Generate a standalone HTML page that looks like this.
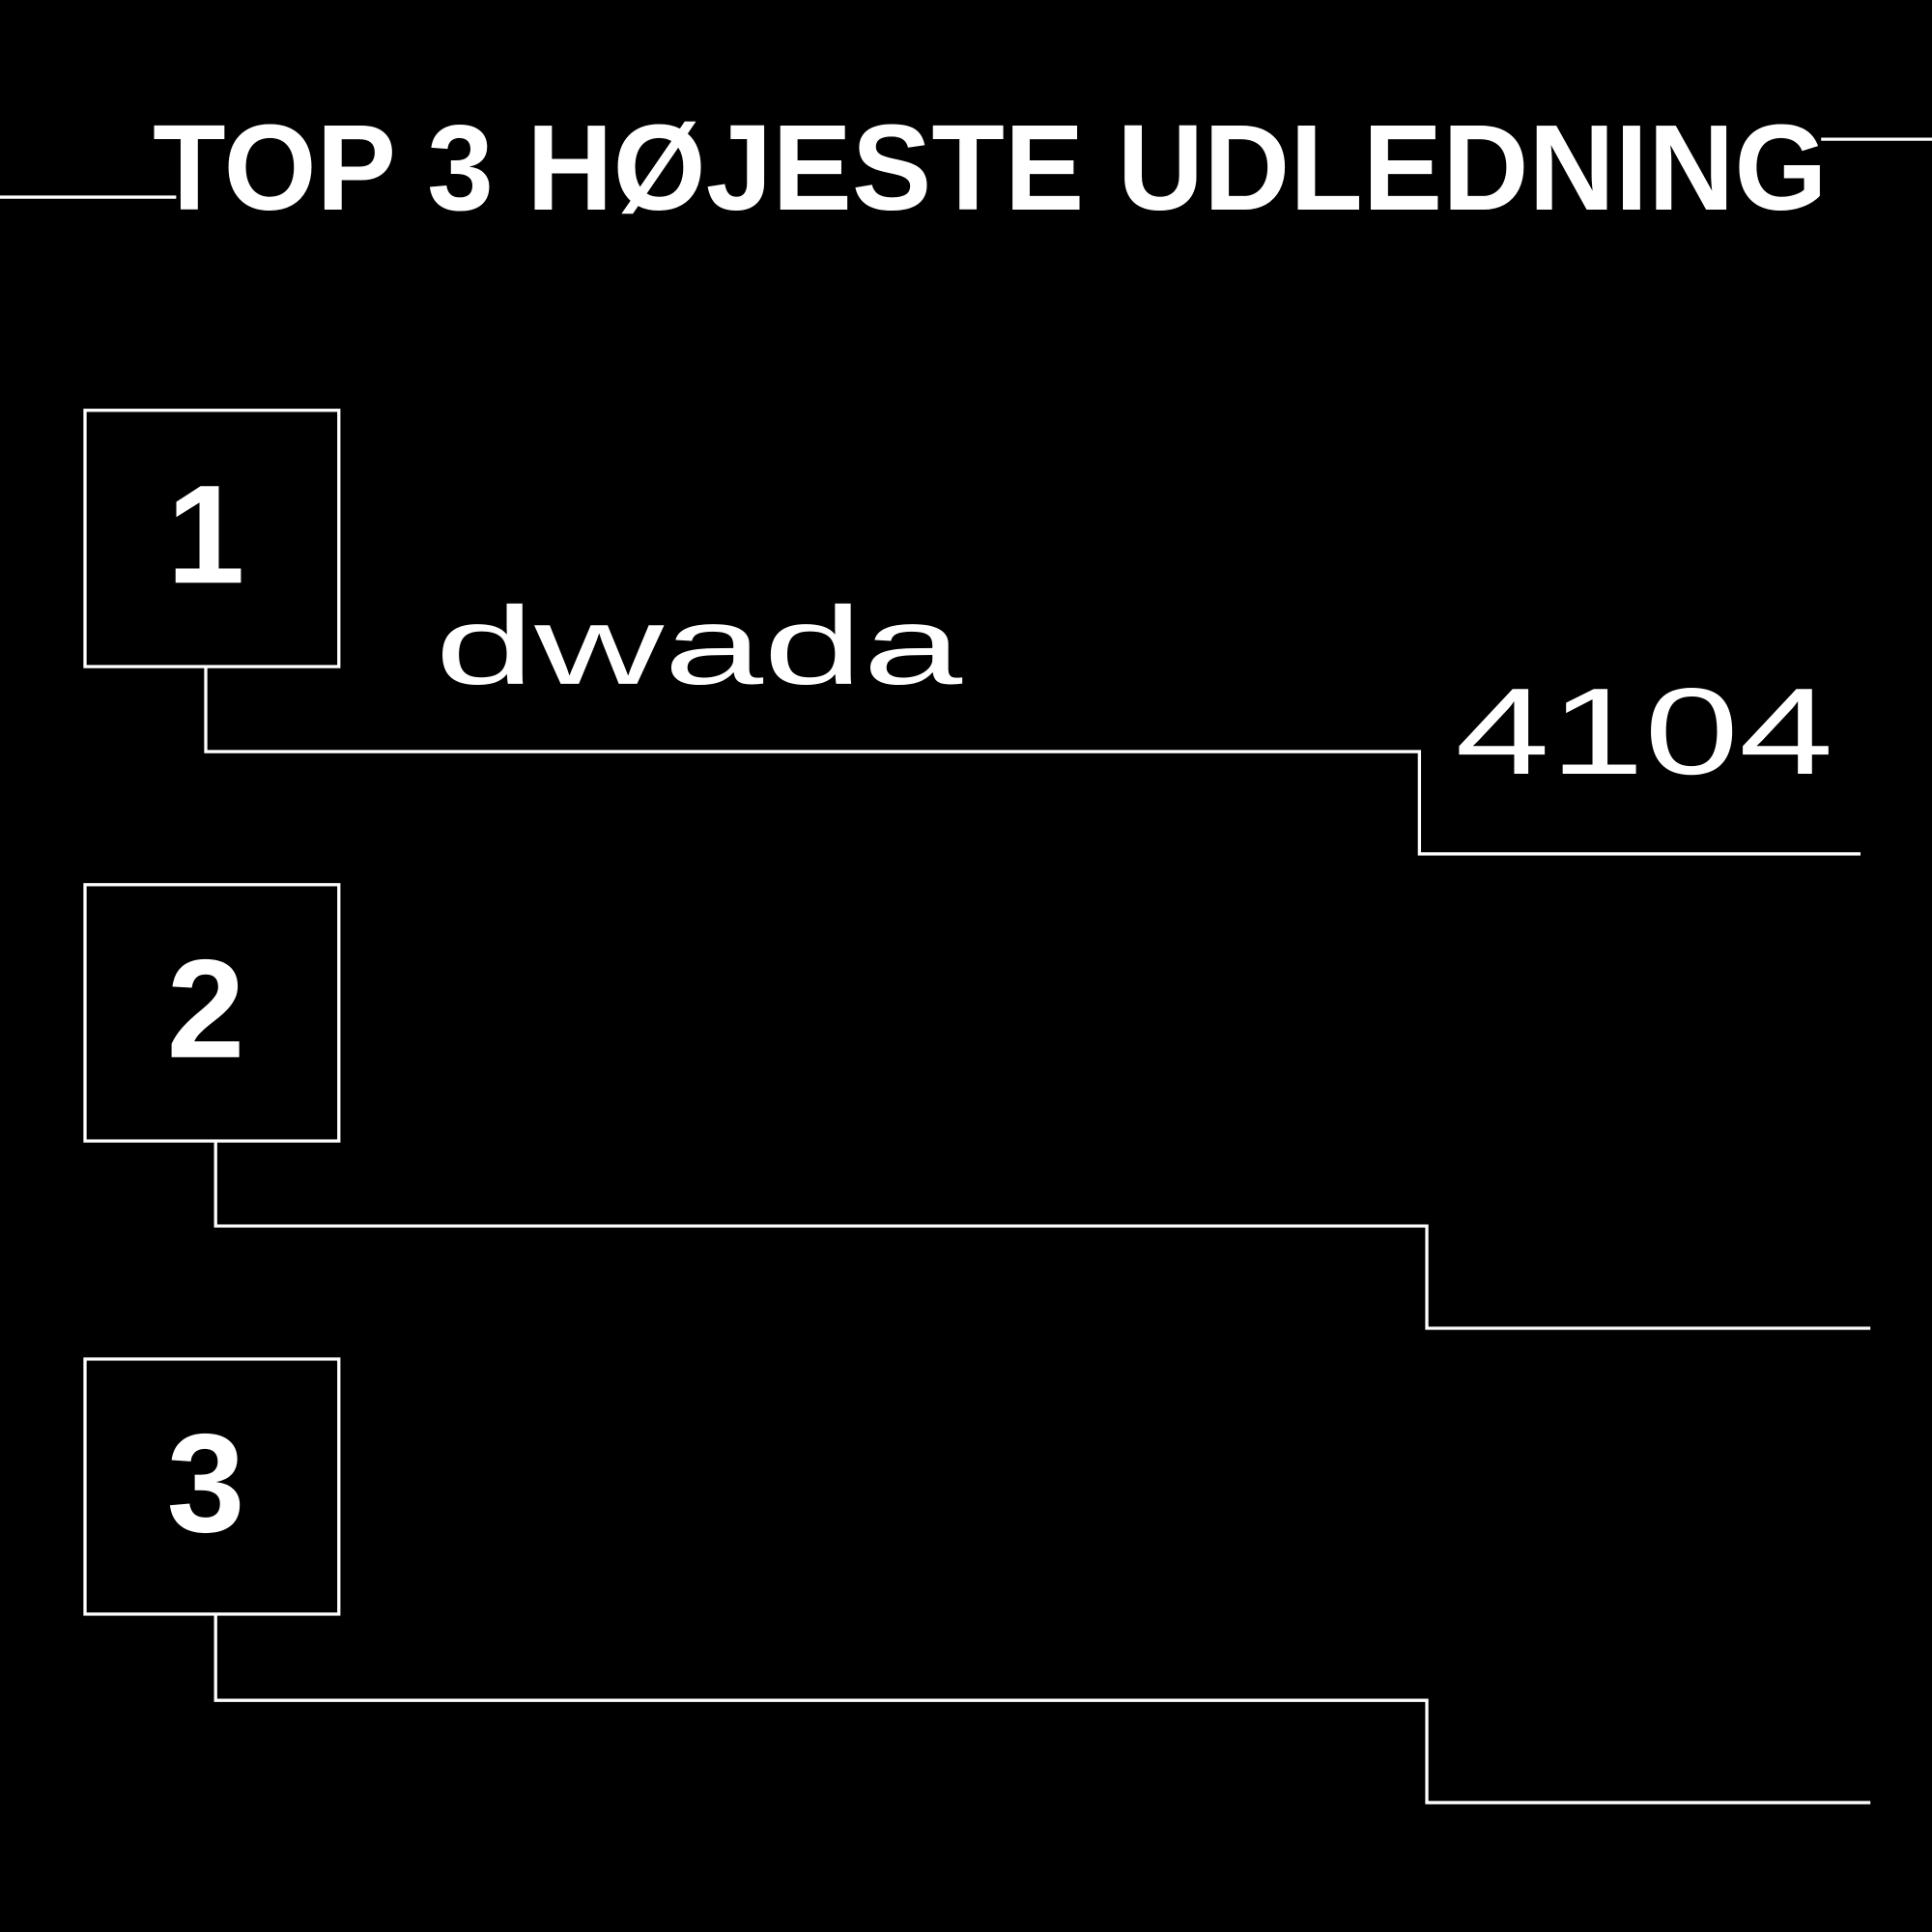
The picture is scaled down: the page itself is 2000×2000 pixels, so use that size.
<!DOCTYPE html>
<html><head><style>html,body{margin:0;padding:0;background:#000;}svg{display:block}</style></head>
<body>
<svg width="2000" height="2000" viewBox="0 0 1568 1568" xmlns="http://www.w3.org/2000/svg">
<rect width="1568" height="1568" fill="#000"/>
<g stroke="#fff" stroke-width="2.6" fill="none">
<line x1="0" y1="160" x2="143" y2="160"/>
<line x1="1478" y1="113" x2="1568" y2="113"/>
<rect x="69" y="333" width="206" height="208"/>
<rect x="69" y="718" width="206" height="208"/>
<rect x="69" y="1103" width="206" height="207"/>
<polyline points="167,541 167,610 1152,610 1152,693 1510,693"/>
<polyline points="175,926 175,995 1158,995 1158,1078 1518,1078"/>
<polyline points="175,1310 175,1380 1158,1380 1158,1463 1518,1463"/>
</g>
<g fill="#fff" font-family="Liberation Sans, sans-serif">
<text x="124" y="170" font-size="99" font-weight="bold" textLength="1359" lengthAdjust="spacingAndGlyphs">TOP 3 HØJESTE UDLEDNING</text>
<text x="167" y="473" font-size="114" font-weight="bold" text-anchor="middle">1</text>
<text x="167" y="858" font-size="114" font-weight="bold" text-anchor="middle">2</text>
<text x="167" y="1243" font-size="114" font-weight="bold" text-anchor="middle">3</text>
<text x="353" y="555" font-size="90" textLength="428" lengthAdjust="spacingAndGlyphs">dwada</text>
<text x="1181" y="628" font-size="100" textLength="307" lengthAdjust="spacingAndGlyphs">4104</text>
</g>
</svg>
</body></html>
